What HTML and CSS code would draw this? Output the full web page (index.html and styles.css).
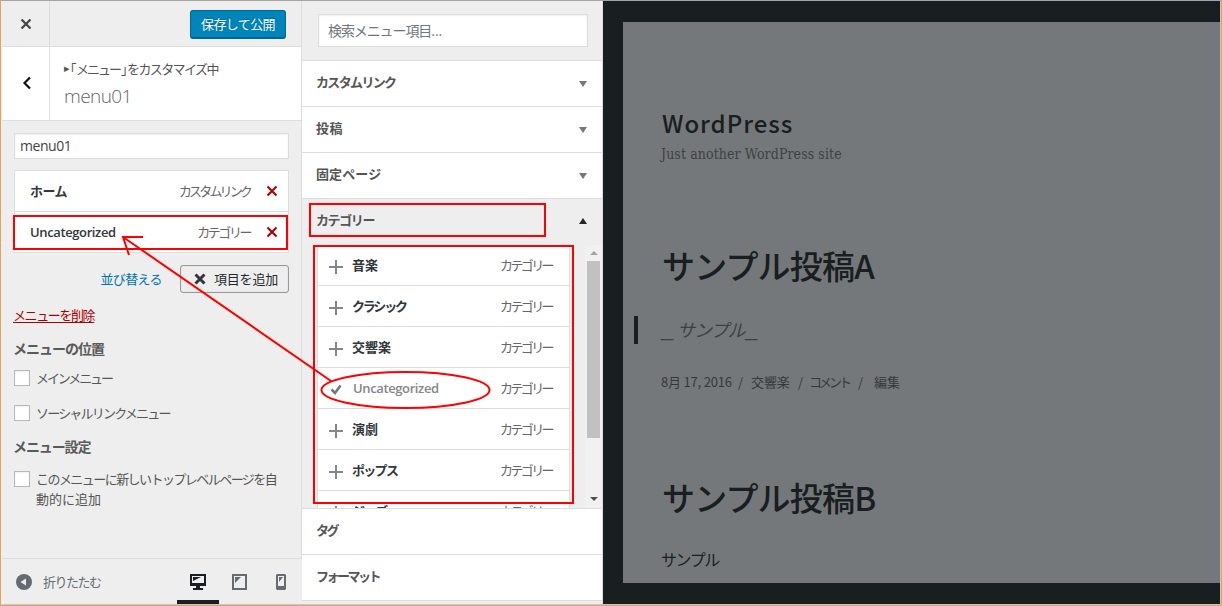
FILE: index.html
```html
<!DOCTYPE html>
<html lang="ja">
<head>
<meta charset="utf-8">
<title>カスタマイズ</title>
<link rel="stylesheet" href="styles.css">
</head>
<body>
<div class="window">
  <aside class="controls">
    <header class="topbar">
      <button class="close" aria-label="閉じる"><svg width="12" height="12" viewBox="0 0 12 12"><path d="M1.500 1.500l9 9M10.500 1.500l-9 9" stroke="#444" stroke-width="2.200"/></svg></button>
      <button class="save">保存して公開</button>
    </header>
    <div class="section-head">
      <button class="back" aria-label="戻る"><svg width="10" height="14" viewBox="0 0 10 14"><path d="M8 1.500L2.500 7L8 12.500" fill="none" stroke="#111" stroke-width="2.200"/></svg></button>
      <div class="section-title">
        <div class="crumb"><span class="tri">▸</span><span class="q">「</span><span class="what">メニュー</span><span class="q2">」</span><span class="doing">をカスタマイズ中</span></div>
        <div class="menu-name">menu01</div>
      </div>
    </div>
    <div class="section-body">
      <div class="name-input">menu01</div>
      <ul class="menu-items">
        <li><b class="home">ホーム</b><span class="type custom">カスタムリンク</span><svg width="12" height="12" viewBox="0 0 12 12"><path class="del" d="M1.500 1.500l9 9M10.500 1.500l-9 9"/></svg></li>
        <li><b class="latin">Uncategorized</b><span class="type">カテゴリー</span><svg width="12" height="12" viewBox="0 0 12 12"><path class="del" d="M1.500 1.500l9 9M10.500 1.500l-9 9"/></svg></li>
      </ul>
      <div class="actions">
        <a class="reorder">並び替える</a>
        <button class="add"><svg width="12" height="12" viewBox="0 0 12 12"><path d="M1.500 1.500l9 9M10.500 1.500l-9 9" stroke="#32373c" stroke-width="3"/></svg><span>項目を追加</span></button>
      </div>
      <a class="delete">メニューを削除</a>
      <h3 class="h-pos">メニューの位置</h3>
      <label class="check"><i></i><span class="t-main">メインメニュー</span></label>
      <label class="check social"><i></i><span class="t-social">ソーシャルリンクメニュー</span></label>
      <h3 class="h-set">メニュー設定</h3>
      <label class="check auto"><i></i><span><span class="t-auto">このメニューに新しいトップレベルページを自</span><br><span class="t-auto2">動的に追加</span></span></label>
    </div>
    <footer class="footer">
      <svg width="16" height="16" viewBox="0 0 16 16"><circle cx="8" cy="8" r="8" fill="#656b71"/><path d="M10 4.500v7L4.500 8z" fill="#eee"/></svg>
      <span class="collapse">折りたたむ</span>
      <div class="devices">
        <span class="device active"><svg width="16" height="16" viewBox="0 0 16 16"><path d="M0 0h16v12h-6v2h3v2H3v-2h3v-2H0zM2 2v7h12V2z" fill="#191e23" fill-rule="evenodd"/><path d="M3 3h8L3 7z" fill="#191e23"/></svg></span>
        <span class="device"><svg width="15" height="16" viewBox="0 0 15 16"><rect x="1" y="1" width="13" height="14" fill="none" stroke="#656b71" stroke-width="2"/><path d="M3 3h6L3 9z" fill="#656b71"/></svg></span>
        <span class="device"><svg width="10" height="16" viewBox="0 0 10 16"><path d="M1 0h8l1 1v14l-1 1H1l-1-1V1zM2 2v10h6V2z" fill="#656b71" fill-rule="evenodd"/><path d="M3 3h4L3 8z" fill="#656b71"/></svg></span>
      </div>
    </footer>
  </aside>

  <section class="available">
    <div class="search"><div class="search-box">検索メニュー項目<span class="dots">...</span></div></div>
    <div class="acc"><b class="a-custom">カスタムリンク</b><i class="down"></i></div>
    <div class="acc"><b class="a-post">投稿</b><i class="down"></i></div>
    <div class="acc"><b class="a-page">固定ページ</b><i class="down"></i></div>
    <div class="acc open"><b class="a-cat">カテゴリー</b><i class="up"></i></div>
    <div class="cat-area">
      <ul class="cats">
        <li><svg class="plus" width="14" height="14"><path d="M7 0v14M0 7h14"/></svg><b class="c-2">音楽</b><span>カテゴリー</span></li>
        <li><svg class="plus" width="14" height="14"><path d="M7 0v14M0 7h14"/></svg><b class="c-5">クラシック</b><span>カテゴリー</span></li>
        <li><svg class="plus" width="14" height="14"><path d="M7 0v14M0 7h14"/></svg><b class="c-2">交響楽</b><span>カテゴリー</span></li>
        <li class="used"><svg class="tick" width="14" height="14"><path d="M2.500 7.500l3.500 3.500L11.500 3.500"/></svg><b class="latin">Uncategorized</b><span>カテゴリー</span></li>
        <li><svg class="plus" width="14" height="14"><path d="M7 0v14M0 7h14"/></svg><b class="c-2">演劇</b><span>カテゴリー</span></li>
        <li><svg class="plus" width="14" height="14"><path d="M7 0v14M0 7h14"/></svg><b class="c-4">ポップス</b><span>カテゴリー</span></li>
        <li><svg class="plus" width="14" height="14"><path d="M7 0v14M0 7h14"/></svg><b class="c-3">ジャズ</b><span>カテゴリー</span></li>
      </ul>
      <div class="scrollbar"><i class="sb-up"></i><i class="thumb"></i><i class="sb-down"></i></div>
    </div>
    <div class="acc"><b class="a-tag">タグ</b></div>
    <div class="acc"><b class="a-format">フォーマット</b></div>
  </section>

  <main class="preview">
    <div class="page">
      <h1 class="site-title">WordPress</h1>
      <p class="tagline">Just another WordPress site</p>
      <h2 class="post-title a">サンプル投稿A</h2>
      <blockquote class="quote"><span>_</span><em>サンプル</em><span>_</span></blockquote>
      <div class="meta"><span class="m-date">8月 17, 2016</span><span class="m-s1">/</span><span class="m-cat">交響楽</span><span class="m-s2">/</span><span class="m-com">コメント</span><span class="m-s3">/</span><span class="m-edit">編集</span></div>
      <h2 class="post-title b">サンプル投稿B</h2>
      <p class="body-text">サンプル</p>
    </div>
  </main>

  <svg class="marks" width="1222" height="606" viewBox="0 0 1222 606">
    <rect x="14" y="216" width="273" height="33"/>
    <rect x="310" y="204" width="235" height="32"/>
    <rect x="314" y="246" width="259" height="257"/>
    <ellipse cx="405.500" cy="390" rx="84" ry="18"/>
    <path d="M331 381L123 237M143 237H123L129 255"/>
  </svg>
</div>
</body>
</html>
```

FILE: styles.css
```css
* { box-sizing: border-box; }
body { margin: 0; font: 13px/20px "Noto Sans CJK JP", sans-serif; color: #555d66; }
ul, h1, h2, h3, p, blockquote { margin: 0; padding: 0; }
ul { list-style: none; }
button { font: inherit; padding: 0; border: 0; background: none; }
svg { display: block; flex: none; }
b, span, a, h1, h2, h3, p { white-space: nowrap; }

.window { position: relative; display: flex; width: 1222px; height: 606px; overflow: hidden; background: #eee; border: 1px solid #e2a263; border-top-color: #a5a5a5; }
.window::after { content: ""; position: absolute; inset: 0; border: 1px solid #c6c6c6; border-top: 0; border-left-color: #f4eee8; pointer-events: none; }

.controls { width: 301px; height: 604px; padding-left: 1px; display: flex; flex-direction: column; flex: none; }
.topbar { height: 46px; display: flex; justify-content: space-between; border-bottom: 1px solid #ddd; border-right: 1px solid #ddd; }
.close { width: 48px; border-right: 1px solid #ddd; display: flex; align-items: center; justify-content: center; }
.save { width: 96px; height: 29px; margin: 9px 15px 0 0; background: #0085ba; border: 1px solid #006799; border-bottom-width: 2px; border-radius: 3px; color: #fff; font-size: 13px; line-height: 24px; letter-spacing: -.6px; text-shadow: 0 -1px 1px #006799; }
.section-head { height: 74px; display: flex; background: #fff; border-bottom: 1px solid #ddd; border-right: 1px solid #ddd; }
.back { width: 48px; border-right: 1px solid #ddd; display: flex; align-items: center; justify-content: center; padding: 0 0 1px 2px; }
.section-title { padding: 12px 0 0 14px; }
.crumb { display: flex; font-size: 13px; color: #555; height: 20px; }
.crumb .tri { font: 11px/20px "DejaVu Sans", sans-serif; width: 6px; }
.crumb .q, .crumb .q2 { font-feature-settings: "halt"; width: 6px; }
.crumb .what { letter-spacing: -2px; width: 45px; }
.crumb .doing { letter-spacing: -1.600px; }
.menu-name { font: 300 19px/30px "Open Sans", sans-serif; color: #666; margin-top: 2px; letter-spacing: -.6px; }

.section-body { height: 437px; padding: 12px 12px 0; border-right: 1px solid #ddd; }
.name-input { height: 26px; border: 1px solid #ddd; background: #fff; padding-left: 5px; font: 14px/24px "Open Sans", sans-serif; letter-spacing: -.45px; color: #444; box-shadow: inset 0 1px 2px #0001; }
.menu-items { margin-top: 11px; width: 275px; }
.menu-items li { height: 42px; margin-bottom: -1px; border: 1px solid #ddd; background: #fff; display: flex; align-items: center; padding: 0 10px 0 15px; color: #32373c; }
.menu-items b { flex: 1; font-weight: 700; font-size: 13px; }
b.home { letter-spacing: -.6px; }
b.latin { font: 600 13px/20px "Open Sans", sans-serif; letter-spacing: -.38px; }
.type { font-size: 13px; color: #666; margin-right: 14px; letter-spacing: -2.450px; }
.type.custom { letter-spacing: -2.850px; }
.menu-items .type { margin-right: 16px; }
.del { stroke: #a00; stroke-width: 2.100; }
.actions { display: flex; justify-content: flex-end; align-items: center; height: 28px; margin-top: 13px; width: 275px; }
.reorder { color: #0073aa; margin-right: 18px; letter-spacing: -.6px; }
.add { width: 109px; height: 28px; border: 1px solid #999; border-radius: 3px; display: flex; align-items: center; padding-left: 13px; gap: 8px; color: #23282d; box-shadow: inset 0 0 1px #aaa; }
.add span { letter-spacing: -.2px; }
.delete { display: block; width: max-content; margin: 12px 0 0 -1px; color: #a00; letter-spacing: -1.400px; text-decoration: underline; line-height: 20px; text-underline-offset: 2px; }
h3 { font-size: 14px; line-height: 20px; font-weight: 700; color: #5a5a5a; }
.h-pos { margin: 13px 0 0 -1px; letter-spacing: -1px; }
.check { display: flex; gap: 6px; margin-top: 10px; color: #555; }
.check i { width: 16px; height: 16px; border: 1px solid #b4b9be; background: #fff; flex: none; margin-top: 2px; box-shadow: inset 0 1px 2px #0001; }
.check.social { margin-top: 15px; }
.t-main { letter-spacing: -2.100px; }
.t-social { letter-spacing: -1.800px; }
.h-set { margin: 13px 0 0 -1px; letter-spacing: -1.100px; }
.check.auto { margin-top: 13px; }
.t-auto { letter-spacing: -1.550px; }
.t-auto2 { letter-spacing: 0; }

.footer { height: 46px; margin-right: -1px; border-top: 1px solid #ddd; display: flex; align-items: center; padding-left: 14px; color: #656b71; }
.collapse { margin-left: 11px; letter-spacing: -1.500px; width: 76px; }
.devices { display: flex; align-self: stretch; margin-left: 58px; }
.device { width: 41px; display: flex; align-items: center; justify-content: center; }
.device.active { width: 42px; border-bottom: 4px solid #191e23; padding-top: 4px; }

.available { width: 301px; height: 603px; border-right: 1px solid #ddd; flex: none; overflow: hidden; }
.search { height: 60px; padding: 13px 14px 0 16px; border-bottom: 1px solid #ddd; }
.search-box { height: 33px; border: 1px solid #ddd; background: #fff; padding-left: 9px; font-size: 14px; line-height: 31px; color: #72777c; letter-spacing: -1.100px; white-space: nowrap; box-shadow: inset 0 1px 2px #0001; }
.dots { font-family: "Open Sans", sans-serif; letter-spacing: 0; }
.acc { height: 46px; border-bottom: 1px solid #ddd; background: #fff; display: flex; justify-content: space-between; padding: 11px 15px 0 14px; color: #555; font-size: 13px; }
.acc.open { background: #eee; border-bottom: 0; }
.acc i { width: 0; height: 0; border: 4px solid transparent; margin-top: 9px; }
.acc .down { border-top: 6px solid #72777c; border-bottom: 0; }
.acc .up { border-bottom: 6px solid #23282d; border-top: 0; margin-top: 8px; }
.a-custom { letter-spacing: -1.650px; }
.a-post { letter-spacing: .5px; }
.a-page { letter-spacing: .1px; }
.a-cat { letter-spacing: -1.400px; }
.a-tag { letter-spacing: -2.600px; }
.a-format { letter-spacing: -2.500px; }
.cat-area { height: 264px; border-bottom: 1px solid #ddd; display: flex; justify-content: space-between; overflow: hidden; }
.cats { width: 253px; margin-left: 15px; }
.cats li { height: 41px; background: #fff; border: 1px solid #ddd; border-top: 0; display: flex; align-items: center; padding: 0 16px 0 11px; color: #32373c; }
.cats b { flex: 1; margin-left: 10px; }
.cats b:not(.latin) { margin-left: 9px; margin-right: 1px; }
.cats span { color: #666; letter-spacing: -2.600px; width: 53px; }
.plus { position: relative; top: 2px; stroke: #82878c; stroke-width: 2; }
.tick { position: relative; top: 1px; stroke: #72777c; stroke-width: 2.500; fill: none; }
.used b { color: #82878c; }
.c-5 { letter-spacing: -2.200px; }
.c-4 { letter-spacing: -1.700px; }
.c-3 { letter-spacing: -1px; }
.scrollbar { width: 17px; background: #f1f1f1; display: flex; flex-direction: column; align-items: center; }
.sb-up { border: 4px solid transparent; border-bottom: 4px solid #a3a3a3; border-top: 0; margin: 6px 0; }
.thumb { width: 13px; height: 177px; background: #c1c1c1; }
.sb-down { border: 4px solid transparent; border-top: 4px solid #505050; border-bottom: 0; margin-top: 59px; }

.preview { flex: 1; background: #191e20; padding: 21px 1px 0 20px; height: 603px; }
.page { height: 561px; background: #74787b; color: #191e20; padding: 86px 0 0 38px; overflow: hidden; }
.site-title { font: 500 24px/30px "Noto Sans CJK JP", sans-serif; letter-spacing: .95px; padding-left: 1px; }
.tagline { font: 14px/20px "DejaVu Serif", serif; font-stretch: condensed; letter-spacing: .1px; color: #3d4144; margin-top: 6px; }
.post-title { font: 500 33px/44px "Noto Sans CJK JP", sans-serif; letter-spacing: -.8px; padding-left: 1px; }
.post-title.a { margin-top: 79px; }
.quote { border-left: 4px solid #191e20; height: 28px; margin: 29px 0 0 -27px; padding-left: 23px; font-size: 18px; line-height: 26px; color: #3d4144; display: flex; }
.quote span { width: 13px; font-family: "Liberation Sans", sans-serif; font-size: 22px; }
.quote em { width: 71px; letter-spacing: -1px; padding-left: 3px; }
.meta { display: flex; margin-top: 28px; color: #34383b; font-size: 13px; line-height: 20px; }
.m-date { width: 77px; letter-spacing: -.2px; }
.m-s1 { width: 13px; }
.m-cat { width: 47px; letter-spacing: -.1px; }
.m-s2 { width: 11px; }
.m-com { width: 49px; letter-spacing: -3px; }
.m-s3 { width: 16px; }
.post-title.b { margin-top: 83px; }
.body-text { font-size: 16px; line-height: 24px; letter-spacing: -1.400px; margin-top: 28px; }

/* Hand-drawn callouts laid over the interface */
.marks { position: absolute; left: -1px; top: -1px; z-index: 5; fill: none; stroke: #f00; stroke-width: 2; pointer-events: none; }
```
